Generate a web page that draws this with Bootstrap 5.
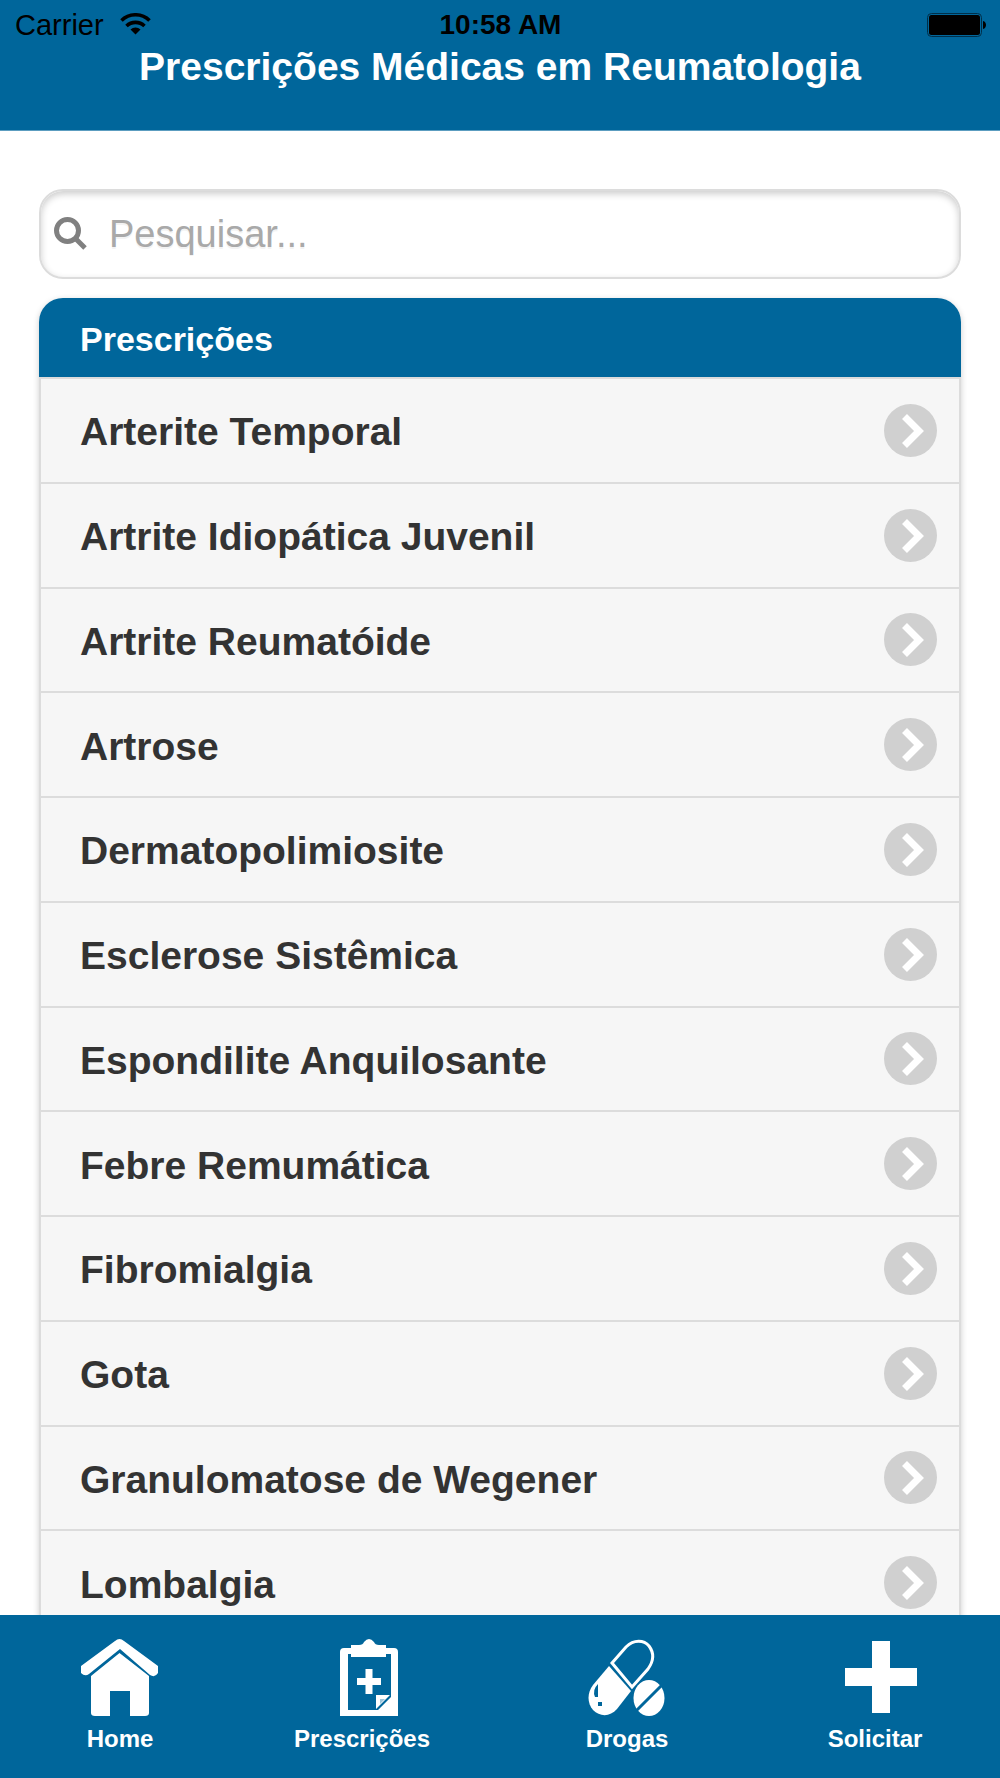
<!DOCTYPE html>
<html lang="pt-BR">
<head>
<meta charset="utf-8">
<meta name="viewport" content="width=device-width, initial-scale=1">
<title>Prescrições Médicas em Reumatologia</title>
<link href="https://cdn.jsdelivr.net/npm/bootstrap@5.3.0/dist/css/bootstrap.min.css" rel="stylesheet">
<style>
  :root { --brand: #00669b; --line: #dcdcdc; }
  body { font-family: "Liberation Sans", Arial, sans-serif; background: #fff; color: #333; }
  .app-header { background: var(--brand); border-bottom: 1px solid #5c9dc0; height: 131px; }
  .status-bar { height: 47px; padding: 3px 14px 0 15px; color: #000; font-size: 29px; line-height: 44px; }
  .status-bar > * { flex: 1 1 0; }
  .status-time { font-size: 28px; }
  .app-title { font-size: 39px; line-height: 40px; color: #fff; }
  .app-main { padding: 58px 39px 0; }
  .search-box { height: 90px; margin-bottom: 19px; padding: 0 13px; border: 2px solid var(--line); border-radius: 24px; box-shadow: inset 0 3px 7px rgba(0,0,0,.2); }
  .search-box input { font-size: 38px; line-height: 48px; color: #333; padding: 0 0 0 22px; }
  .search-box input::placeholder { color: #a9a9a9; opacity: 1; text-shadow: 0 2px 0 #f3f3f3; }
  .list-panel { border-radius: 24px 24px 0 0; box-shadow: 0 2px 6px rgba(0,0,0,.2); }
  .list-title { height: 79px; padding: 1px 41px 0; background: var(--brand); color: #fff; font-size: 34px; line-height: 80px; border-radius: 24px 24px 0 0; }
  .list-panel .list-group { --bs-list-group-border-radius: 0; min-height: 1257px; border: solid var(--line); border-width: 0 2px; }
  .list-panel .list-group-item { flex: 1 0 auto; min-height: 104px; padding: 0 22px 0 39px; border-width: 2px 0 0; border-color: var(--line); background: #f6f6f6; color: #333; font-size: 39px; line-height: 48px; }
  .app-tabs { height: 163px; background: var(--brand); display: grid; grid-template-columns: 240fr 244fr 286fr 210fr 20fr; }
  .app-tabs a { color: #fff; font-size: 24px; line-height: 28px; padding-top: 23px; }
  .app-tabs svg { margin-bottom: 7px; }
</style>
</head>
<body>
<header class="app-header">
  <div class="status-bar d-flex align-items-center">
    <div class="d-flex align-items-center gap-3">
      <span>Carrier</span>
      <svg width="31" height="24" viewBox="0 0 31 24" fill="none" stroke="#000" role="img" aria-label="Wi-Fi">
        <path d="M1.500 7.500a20 20 0 0 1 28 0M6.500 13a13 13 0 0 1 18 0" stroke-width="3.600"/>
        <path d="M15.500 21.500l-5-5a7.500 7.500 0 0 1 10 0z" fill="#000" stroke="none"/>
      </svg>
    </div>
    <div class="status-time fw-bold text-center">10:58 AM</div>
    <div class="d-flex justify-content-end">
      <svg width="59" height="24" viewBox="0 0 59 24" role="img" aria-label="Bateria">
        <rect x=".5" y=".5" width="54" height="23" rx="4" fill="none" stroke="#002f49"/>
        <rect x="2" y="2" width="51" height="20" rx="2.500"/>
        <path d="M56 8c4 1 4 7 0 8z"/>
      </svg>
    </div>
  </div>
  <h1 class="app-title fw-bold text-center m-0">Prescrições Médicas em Reumatologia</h1>
</header>

<main class="app-main">
  <form class="search-box d-flex align-items-center bg-white" role="search">
    <label for="q" class="d-flex">
      <svg width="33" height="34" viewBox="0 0 33 34" fill="none" stroke="#808080" role="img" aria-label="Pesquisar">
        <circle cx="13.500" cy="13.500" r="11" stroke-width="5"/><path d="M21 21l10 10" stroke-width="5"/>
      </svg>
    </label>
    <input id="q" type="text" class="form-control border-0 bg-transparent shadow-none" placeholder="Pesquisar...">
  </form>

  <section class="list-panel">
    <h2 class="list-title fw-bold m-0">Prescrições</h2>
    <div class="list-group list-group-flush fw-bold" id="items"></div>
  </section>
</main>

<nav class="app-tabs fixed-bottom fw-bold" aria-label="Principal">
  <a href="#home" class="d-flex flex-column align-items-center text-decoration-none">
    <svg width="92" height="80" viewBox="0 0 92 80" fill="#fff" aria-hidden="true">
      <path d="M7 28L41 3q4.500-4 9 0L84 28v7q-3 5-8 2L46 11 15 36q-4 3-8-1z"/>
      <path d="M17 38L45.500 15 75 38v37q0 3-4 3H56V53H36v25H21q-4 0-4-3z"/>
    </svg>
    Home
  </a>
  <a href="#prescricoes" class="d-flex flex-column align-items-center text-decoration-none">
    <svg width="92" height="80" viewBox="0 0 92 80" fill="#fff" aria-hidden="true">
      <path fill-rule="evenodd" d="M24 78V14q0-4 4-4h50q4 0 4 4v64zM32 16v56h30l13-13V16z"/>
      <path d="M35 7h8q4 0 5-3 5-6 10 0 1 3 5 3h7v12H35z"/>
      <path d="M49.500 31h7v9H65v7h-8.500v9h-7v-9H41v-7h8.500zM60 57h14L60 71z"/>
      <path d="M64 61h5l-5 5z" fill="#9bc5db"/>
    </svg>
    Prescrições
  </a>
  <a href="#drogas" class="d-flex flex-column align-items-center text-decoration-none">
    <svg width="92" height="80" viewBox="0 0 92 80" fill="none" aria-hidden="true">
      <path d="M31 25L45 9C53 1 63 2 68 8c6 8 4 16-1 23L51 49z" stroke="#fff" stroke-width="3"/>
      <path d="M28 28l22 25-14 18c-7 8-17 8-24 1-6-7-6-17 0-25z" fill="#fff"/>
      <path d="M17 46q-6 6-3 13h3v-9zM17 64h4v4h-4z" fill="#00669b"/>
      <ellipse cx="68" cy="60" rx="15.500" ry="18" fill="#fff"/>
      <path d="M54 74l29-29" stroke="#00669b" stroke-width="3"/>
    </svg>
    Drogas
  </a>
  <a href="#solicitar" class="d-flex flex-column align-items-center text-decoration-none">
    <svg width="92" height="80" viewBox="0 0 92 80" fill="#fff" aria-hidden="true">
      <path d="M43 3h18v27h27v18H61v27H43V48H16V30h27z"/>
    </svg>
    Solicitar
  </a>
</nav>

<script src="https://cdn.jsdelivr.net/npm/bootstrap@5.3.0/dist/js/bootstrap.bundle.min.js"></script>
<script>
  const names = ["Arterite Temporal", "Artrite Idiopática Juvenil", "Artrite Reumatóide", "Artrose",
    "Dermatopolimiosite", "Esclerose Sistêmica", "Espondilite Anquilosante", "Febre Remumática",
    "Fibromialgia", "Gota", "Granulomatose de Wegener", "Lombalgia"];
  document.getElementById("items").innerHTML = names.map(n => `
    <a href="#" class="list-group-item list-group-item-action d-flex align-items-center justify-content-between">
      <span class="pt-1">${n}</span>
      <svg width="53" height="53" viewBox="0 0 53 53" fill="none" aria-hidden="true">
        <circle cx="26.500" cy="26.500" r="26.500" fill="#d0d0d0"/>
        <path d="M20.500 12.500L35 27 20.500 41.500" stroke="#fff" stroke-width="7"/>
      </svg>
    </a>`).join("");
</script>
</body>
</html>
